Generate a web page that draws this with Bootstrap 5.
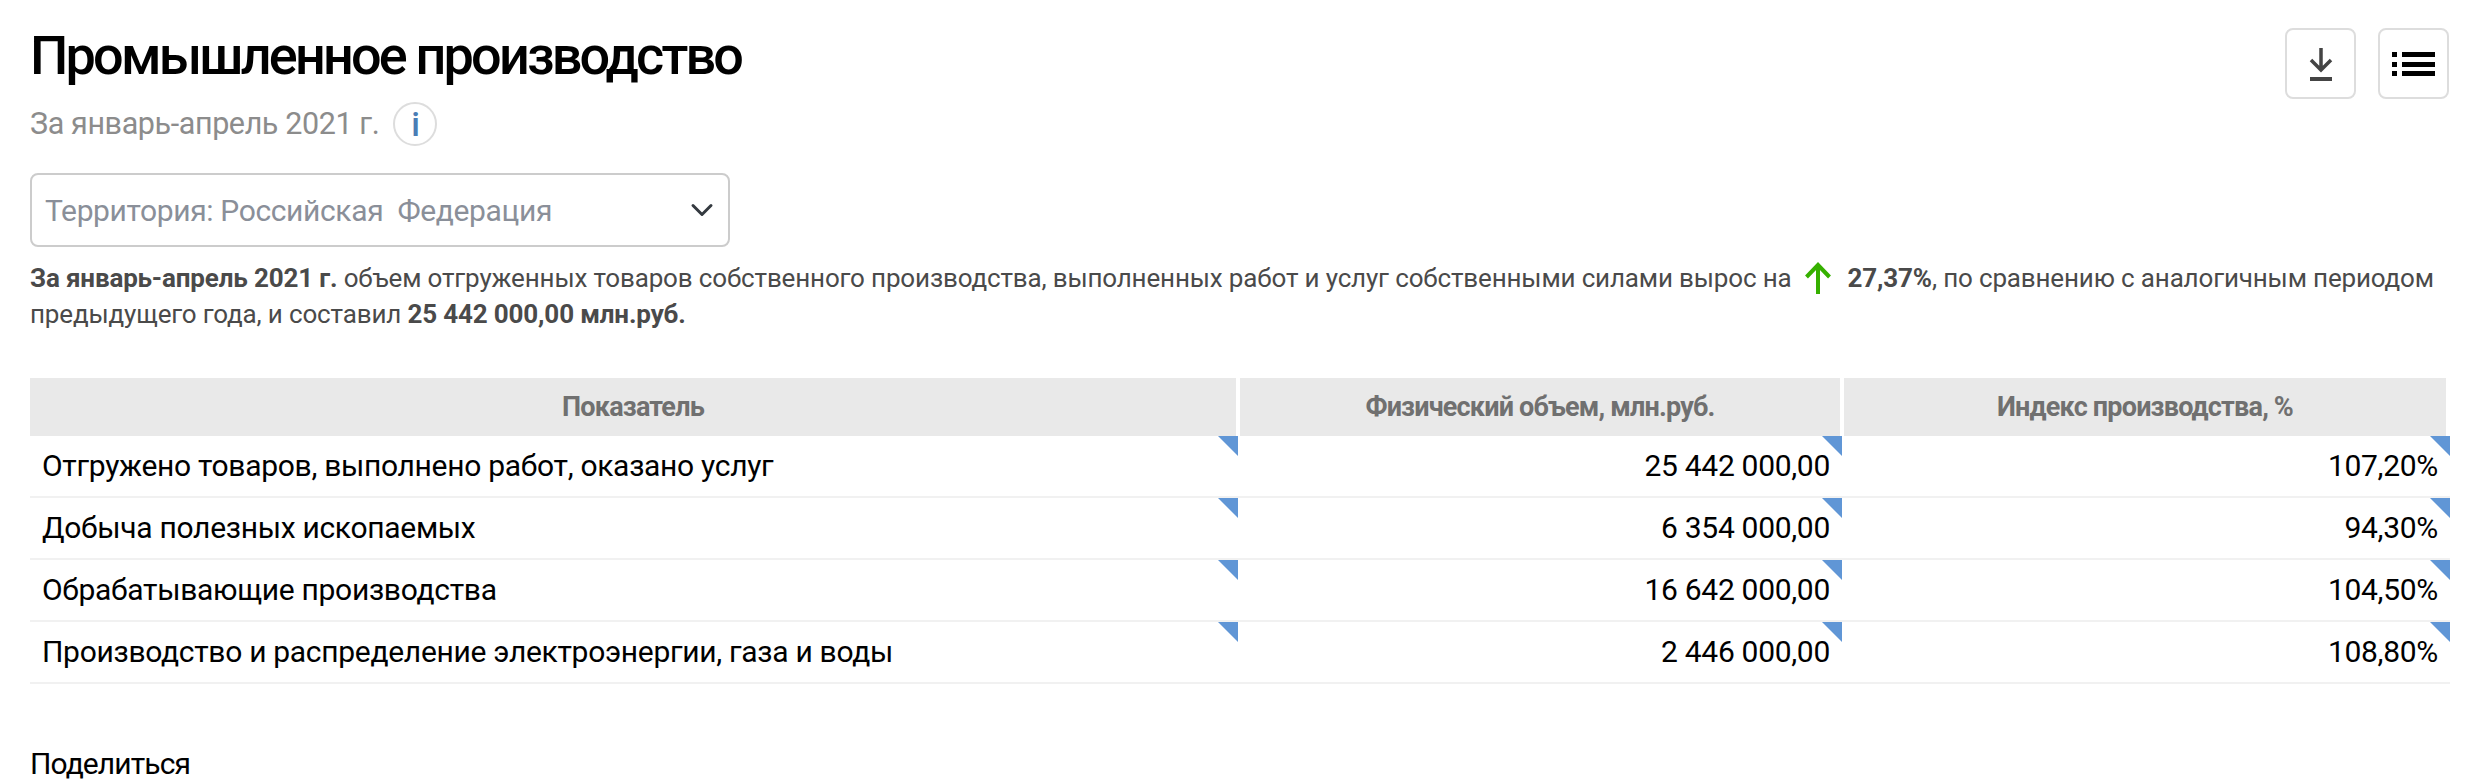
<!DOCTYPE html>
<html lang="ru"><head><meta charset="utf-8"><title>Промышленное производство</title>
<link href="https://cdn.jsdelivr.net/npm/bootstrap@5.3.0/dist/css/bootstrap.min.css" rel="stylesheet">
<style>
html,body{height:784px;overflow:hidden}
body{font-family:Roboto,"Liberation Sans",sans-serif;color:#000;background:#fff;letter-spacing:-.025em}
.page-wrap{padding:0 23px 0 30px}
.head-row{height:173px}
.page-title{font-size:54px;font-weight:500;line-height:64px;margin:24px 0 0;letter-spacing:-.052em}
.page-sub{font-size:30.5px;line-height:44px;color:#8c8c8c;margin-top:14px;gap:14px}
.info-dot{width:44px;height:44px;border:2px solid #ddd;border-radius:50%;color:#4a7db5;font-size:34px;font-weight:500;line-height:1}
.tool-group{gap:22px}
.tool-btn{width:71px;height:71px;border:2px solid #ddd;border-radius:8px;background:#fff;padding:0;margin-top:28px}
.terr-select{width:700px;height:74px;font-size:30px;color:#8a8f99;border:2px solid #ccc;border-radius:8px;padding:0 60px 0 13px;background-size:32px 24px;background-position:right 10px center;letter-spacing:-.012em}
.lead-text{font-size:26px;line-height:36px;color:#4a4a4a;margin:13px 0 0;letter-spacing:-.006em}
.lead-text b{font-weight:700}
.up-arrow{width:26px;height:32px;vertical-align:-7px;margin:0 17px 0 13px}
.data-table{table-layout:fixed;width:2420px;margin:46px 0 0;border-collapse:separate;border-spacing:0}
.data-table th{background:#e9e9e9;background-clip:padding-box;color:#707070;font-size:27px;font-weight:700;text-align:center;height:58px;padding:0;vertical-align:middle;border:0;border-left:2px solid #fff;border-right:2px solid #fff;letter-spacing:-.03em}
.data-table th:first-child{border-left:0}
.data-table th:last-child{border-right-width:4px}
.data-table td{position:relative;height:62px;font-size:30px;padding:0 12px 2px 12px;vertical-align:middle;border-bottom:2px solid #f1f1f1;color:#000;letter-spacing:-.01em}
.corner-mark{position:absolute;top:0;right:0;width:20px;height:20px;background:#6096d6;clip-path:polygon(0 0,100% 0,100% 100%)}
.share-label{font-size:30px;line-height:40px;margin-top:60px;letter-spacing:-.03em}
</style></head><body>
<div class="page-wrap">
 <div class="d-flex justify-content-between align-items-start head-row">
  <div>
   <h1 class="page-title">Промышленное производство</h1>
   <div class="page-sub d-flex align-items-center">За январь-апрель 2021 г. <span class="info-dot d-inline-flex align-items-center justify-content-center">i</span></div>
  </div>
  <div class="d-flex tool-group">
   <button class="tool-btn d-flex align-items-center justify-content-center" aria-label="Скачать"><svg width="28" height="36" viewBox="0 0 28 36"><path d="M14 2V23M4 14l10 10 10-10" fill="none" stroke="#444" stroke-width="3.5"/><path d="M3 33h22" stroke="#444" stroke-width="4"/></svg></button>
   <button class="tool-btn d-flex align-items-center justify-content-center" aria-label="Список"><svg width="44" height="24" viewBox="0 0 44 24"><path d="M0 0h5v5H0zM0 10h5v5H0zM0 19h5v5H0zM10 0h33v5H10zM10 10h33v5H10zM10 19h33v5H10z"/></svg></button>
  </div>
 </div>
 <select class="form-select terr-select"><option>Территория: Российская&nbsp; Федерация</option></select>
 <p class="lead-text"><b>За январь-апрель 2021 г.</b> объем отгруженных товаров собственного производства, выполненных работ и услуг собственными силами вырос на<svg class="up-arrow" viewBox="0 0 26 32"><path d="M13 32V3M1.5 15L13 3l11.500 12" fill="none" stroke="#36b000" stroke-width="4"/></svg><b>27,37%</b>, по сравнению с аналогичным периодом<br>предыдущего года, и составил <b>25 442 000,00 млн.руб.</b></p>
 <table class="table data-table">
  <colgroup><col style="width:1208px"><col style="width:604px"><col></colgroup>
  <thead><tr><th>Показатель</th><th>Физический объем, млн.руб.</th><th>Индекс производства, %</th></tr></thead>
  <tbody>
   <tr><td>Отгружено товаров, выполнено работ, оказано услуг<i class="corner-mark"></i></td><td class="text-end">25 442 000,00<i class="corner-mark"></i></td><td class="text-end">107,20%<i class="corner-mark"></i></td></tr>
   <tr><td>Добыча полезных ископаемых<i class="corner-mark"></i></td><td class="text-end">6 354 000,00<i class="corner-mark"></i></td><td class="text-end">94,30%<i class="corner-mark"></i></td></tr>
   <tr><td>Обрабатывающие производства<i class="corner-mark"></i></td><td class="text-end">16 642 000,00<i class="corner-mark"></i></td><td class="text-end">104,50%<i class="corner-mark"></i></td></tr>
   <tr><td>Производство и распределение электроэнергии, газа и воды<i class="corner-mark"></i></td><td class="text-end">2 446 000,00<i class="corner-mark"></i></td><td class="text-end">108,80%<i class="corner-mark"></i></td></tr>
  </tbody>
 </table>
 <div class="share-label">Поделиться</div>
</div>
<script src="https://cdn.jsdelivr.net/npm/bootstrap@5.3.0/dist/js/bootstrap.bundle.min.js"></script>
</body></html>
